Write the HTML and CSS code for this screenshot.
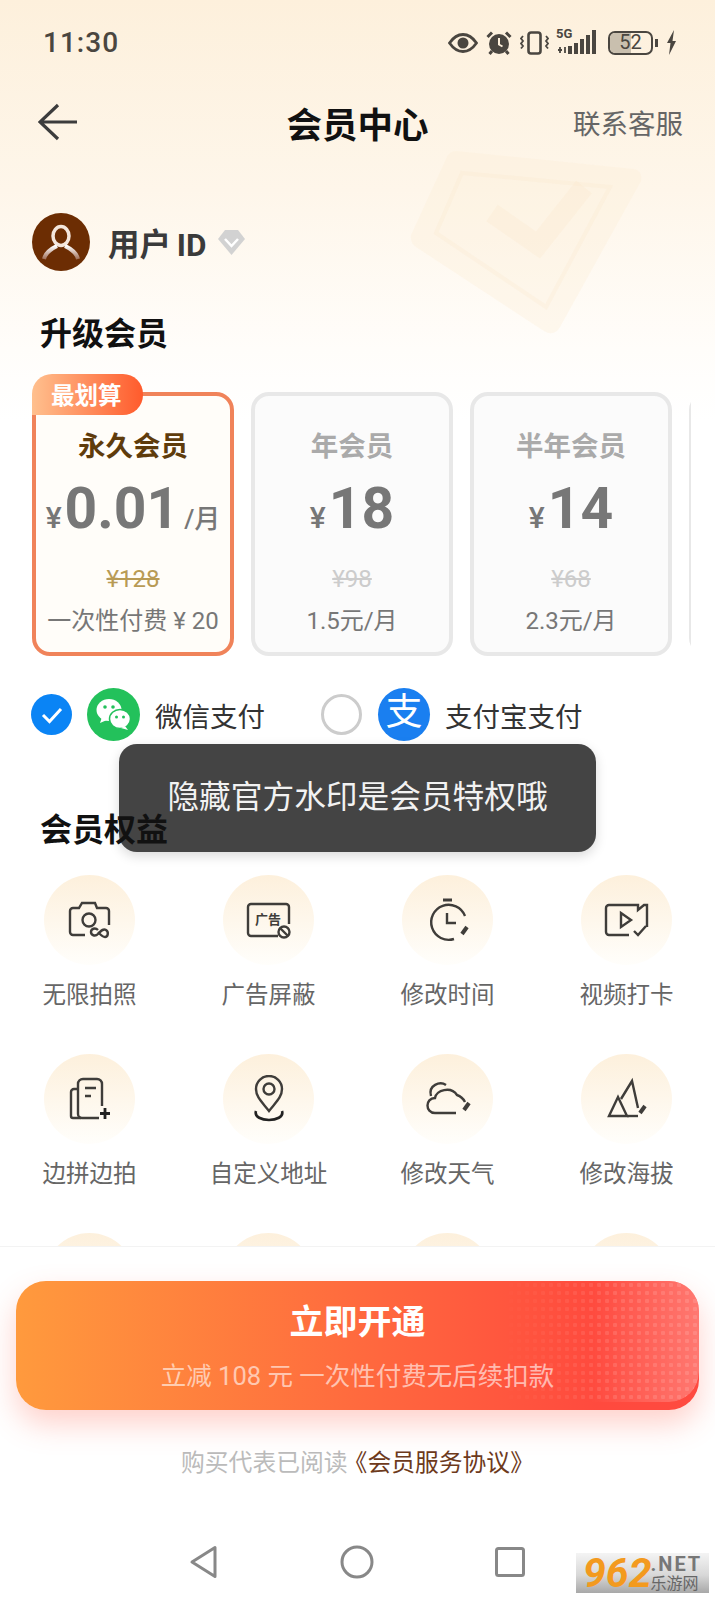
FILE: index.html
```html
<!DOCTYPE html>
<html>
<head>
    <title>会员中心</title>
    <link rel="stylesheet" href="styles.css">
</head>
<body>
<div class="page">
    <!-- Faded check badge behind the header -->
    <svg class="bg-mark" viewBox="0 0 233 188" width="233" height="188">
        <path d="M46 4 L224 22 Q233 24 231 34 L150 180 Q144 190 134 184 L6 100 Q0 96 1 88 L36 12 Q39 4 46 4Z" fill="#fdeed8" opacity="0.35"/>
        <path d="M52 26 L200 40 L136 160 L26 86Z" fill="none" stroke="#fde8cc" stroke-width="4" opacity="0.25"/>
        <path d="M82 66 L128 98 L174 40" fill="none" stroke="#fde8cc" stroke-width="20" opacity="0.3"/>
    </svg>

    <div class="main">
        <div class="status">
            <span class="time">11:30</span>
            <div class="status-icons">
                <svg width="30" height="20" viewBox="0 0 30 20"><path d="M1.5 10C6 3.5 10 1.5 15 1.5S24 3.500 28.500 10C24 16.500 20 18.500 15 18.500S6 16.500 1.500 10Z" fill="none" stroke="#4a4640" stroke-width="2.800"/><circle cx="15" cy="10" r="5.500" fill="#4a4640"/></svg>
                <svg width="26" height="24" viewBox="0 0 26 24"><circle cx="13" cy="13" r="10" fill="#4a4640"/><path d="M13 7v6.500l3.500 2" fill="none" stroke="#fdf0dc" stroke-width="2"/><path d="M1.500 6L6 1.500M24.500 6L20 1.500M6 20l-2.500 3M20 20l2.500 3" stroke="#4a4640" stroke-width="3"/></svg>
                <svg width="29" height="24" viewBox="0 0 29 24"><rect x="8.500" y="1.500" width="12" height="21" rx="2.500" fill="none" stroke="#4a4640" stroke-width="2.600"/><path d="M3 5l-2 2.500 2 2.500-2 2.500 2 2.500-2 2.500M26 5l2 2.500-2 2.500 2 2.500-2 2.500 2 2.500" fill="none" stroke="#4a4640" stroke-width="1.800"/></svg>
                <div class="signal">
                    <span class="five-g">5G</span>
                    <svg width="41" height="25" viewBox="0 0 41 25"><path d="M1 20h4M3 17v6M8 17v6" stroke="#4a4640" stroke-width="1.800"/><rect x="11" y="16" width="4" height="8" fill="#4a4640"/><rect x="17" y="13" width="4" height="11" fill="#4a4640"/><rect x="23" y="9" width="4" height="15" fill="#4a4640"/><rect x="29" y="5" width="4" height="19" fill="#4a4640"/><rect x="35" y="0" width="4" height="24" fill="#4a4640"/></svg>
                </div>
                <div class="battery"><span class="battery-level"></span><span class="battery-num">52</span></div>
                <span class="battery-nub"></span>
                <svg width="11" height="25" viewBox="0 0 11 25"><path d="M8 0L1 13h3.500L3 25l7-14H6.500Z" fill="#4a4640"/></svg>
            </div>
        </div>

        <div class="nav">
            <svg width="40" height="38" viewBox="0 0 40 38"><path d="M20 2L2 19l18 17M2 19h37" fill="none" stroke="#3c3c3c" stroke-width="3.200"/></svg>
            <h1 class="nav-title">会员中心</h1>
            <span class="nav-link">联系客服</span>
        </div>

        <div class="user">
            <svg class="avatar" width="58" height="58" viewBox="0 0 58 58">
                <defs><linearGradient id="shoulder" x1="0" y1="0" x2="0" y2="1"><stop offset="0" stop-color="#fff"/><stop offset="1" stop-color="#a0705a"/></linearGradient></defs>
                <circle cx="29" cy="29" r="29" fill="#6c2d03"/>
                <ellipse cx="29" cy="23" rx="8" ry="9.500" fill="none" stroke="#f4e6dc" stroke-width="3.500"/>
                <path d="M12 46c2-8 9-11 13-13M46 46c-2-8-9-11-13-13" fill="none" stroke="url(#shoulder)" stroke-width="4"/>
            </svg>
            <span class="user-name">用户 ID</span>
            <svg width="27" height="26" viewBox="0 0 27 26"><path d="M7 1h13l7 9-13.500 16L0 10Z" fill="#d2d2d2"/><path d="M7 10l6.500 7 6.500-7" fill="none" stroke="#fff" stroke-width="2.500"/></svg>
        </div>

        <h2 class="section-title">升级会员</h2>

        <div class="plans">
            <div class="plan plan-active">
                <span class="plan-badge">最划算</span>
                <div class="plan-name">永久会员</div>
                <div class="plan-price"><span class="yen">¥</span><span class="amount">0.01</span><span class="unit">/月</span></div>
                <div class="plan-old">¥128</div>
                <div class="plan-note">一次性付费 ¥ 20</div>
            </div>
            <div class="plan">
                <div class="plan-name">年会员</div>
                <div class="plan-price"><span class="yen">¥</span><span class="amount">18</span></div>
                <div class="plan-old">¥98</div>
                <div class="plan-note">1.5元/月</div>
            </div>
            <div class="plan">
                <div class="plan-name">半年会员</div>
                <div class="plan-price"><span class="yen">¥</span><span class="amount">14</span></div>
                <div class="plan-old">¥68</div>
                <div class="plan-note">2.3元/月</div>
            </div>
            <div class="plan"></div>
        </div>

        <div class="pay">
            <div class="pay-item pay-wechat">
                <svg class="pay-check" width="41" height="41" viewBox="0 0 41 41"><circle cx="20.500" cy="20.500" r="20.500" fill="#0a84f5"/><path d="M12 21l6.500 6.500L30 15" fill="none" stroke="#fff" stroke-width="3"/></svg>
                <svg width="53" height="53" viewBox="0 0 53 53">
                    <circle cx="26.500" cy="26.500" r="26.500" fill="#23c15b"/>
                    <ellipse cx="22" cy="22" rx="12.500" ry="11" fill="#fff"/>
                    <path d="M15 29l-2 6 7-3Z" fill="#fff"/>
                    <ellipse cx="33" cy="31" rx="10.500" ry="9.500" fill="#fff" stroke="#23c15b" stroke-width="1.500"/>
                    <path d="M38 38l3 4-7-2Z" fill="#fff"/>
                    <circle cx="18" cy="19" r="1.800" fill="#23c15b"/><circle cx="26" cy="19" r="1.800" fill="#23c15b"/>
                    <circle cx="29.500" cy="29" r="1.500" fill="#23c15b"/><circle cx="36.500" cy="29" r="1.500" fill="#23c15b"/>
                </svg>
                <span class="pay-label">微信支付</span>
            </div>
            <div class="pay-item pay-ali">
                <span class="pay-radio"></span>
                <span class="ali-logo">支</span>
                <span class="pay-label">支付宝支付</span>
            </div>
        </div>

        <h2 class="section-title perks-title">会员权益</h2>

        <div class="perks">
            <div class="perk">
                <div class="perk-icon"><svg width="48" height="48" viewBox="0 0 48 48"><g fill="none" stroke="#3f3d3a" stroke-width="2.400"><path d="M19 39H7a3 3 0 0 1-3-3V15a3 3 0 0 1 3-3h6l3-5h13l2 5h9a3 3 0 0 1 3 3v14"/><circle cx="23" cy="24" r="6.500"/><path d="M32 34c-3-3-7-1-7 2s4 5 7 2 5-6 8-4 2 7-1 7-5-3-7-5"/></g></svg></div>
                <span class="perk-label">无限拍照</span>
            </div>
            <div class="perk">
                <div class="perk-icon"><svg width="48" height="48" viewBox="0 0 48 48"><g fill="none" stroke="#3f3d3a" stroke-width="2.400"><path d="M33 40H6a3 3 0 0 1-3-3V11a3 3 0 0 1 3-3h35a3 3 0 0 1 3 3v17"/><circle cx="39" cy="36" r="5.500"/><path d="M35 32l8 8"/></g><text x="10" y="28" class="ad-text">广告</text></svg></div>
                <span class="perk-label">广告屏蔽</span>
            </div>
            <div class="perk">
                <div class="perk-icon"><svg width="48" height="48" viewBox="0 0 48 48"><g fill="none" stroke="#3f3d3a" stroke-width="2.400"><path d="M19 4h9" stroke-width="3"/><path d="M30 43A17.500 17.500 0 1 1 41 20"/><path d="M23 17v10h9"/><path d="M43 31l-5 7" stroke-width="4"/></g></svg></div>
                <span class="perk-label">修改时间</span>
            </div>
            <div class="perk">
                <div class="perk-icon"><svg width="48" height="48" viewBox="0 0 48 48"><g fill="none" stroke="#3f3d3a" stroke-width="2.400"><path d="M26 39H6a3 3 0 0 1-3-3V12a3 3 0 0 1 3-3h29v5l6-5h3v22"/><path d="M18 17l10 7-10 7Z"/><path d="M31 35l4 4 8-9"/></g></svg></div>
                <span class="perk-label">视频打卡</span>
            </div>
            <div class="perk">
                <div class="perk-icon"><svg width="48" height="48" viewBox="0 0 48 48"><g fill="none" stroke="#3f3d3a" stroke-width="2.400"><path d="M12 14H8a3 3 0 0 0-3 3v24a2 2 0 0 0 2 2h8"/><path d="M36 31V9a5 5 0 0 0-5-5H17a5 5 0 0 0-5 5v30a4 4 0 0 0 4 4h17"/><path d="M19 13h11M19 21h6"/><path d="M39 33v11M34 38.500h10" stroke="#222" stroke-width="2.800"/></g></svg></div>
                <span class="perk-label">边拼边拍</span>
            </div>
            <div class="perk">
                <div class="perk-icon"><svg width="48" height="48" viewBox="0 0 48 48"><g fill="none" stroke="#3f3d3a" stroke-width="2.400"><path d="M24 36C17 27 11 22 11 14a13 13 0 0 1 26 0c0 8-6 13-13 22Z"/><circle cx="24" cy="14" r="5.500"/><path d="M11 36c-2 6 6 9 13 9s15-3 13-9" stroke="#222" stroke-width="2.600"/></g></svg></div>
                <span class="perk-label">自定义地址</span>
            </div>
            <div class="perk">
                <div class="perk-icon"><svg width="48" height="48" viewBox="0 0 48 48"><g fill="none" stroke="#3f3d3a" stroke-width="2.400"><path d="M32 38H11c-10 0-10-15 0-15 1-8 16-12 22-3 3 1 6 3 8 7"/><path d="M7 21c-3-11 9-15 15-11"/><path d="M45 28l-5 7" stroke-width="4"/></g></svg></div>
                <span class="perk-label">修改天气</span>
            </div>
            <div class="perk">
                <div class="perk-icon"><svg width="48" height="48" viewBox="0 0 48 48"><g fill="none" stroke="#3f3d3a" stroke-width="2.400"><path d="M6 41l9-19 9 19H6Z"/><path d="M18 24L29 6l6 27"/><path d="M24 41h11"/><path d="M42 31l-5 7" stroke-width="4"/></g></svg></div>
                <span class="perk-label">修改海拔</span>
            </div>
            <div class="perk"><div class="perk-icon"></div></div>
            <div class="perk"><div class="perk-icon"></div></div>
            <div class="perk"><div class="perk-icon"></div></div>
            <div class="perk"><div class="perk-icon"></div></div>
        </div>
    </div>

    <div class="footer">
        <div class="buy-btn">
            <span class="buy-title">立即开通</span>
            <span class="buy-sub">立减 108 元 一次性付费无后续扣款</span>
        </div>
        <p class="agree">购买代表已阅读<span class="agree-link">《会员服务协议》</span></p>
        <div class="sysnav">
            <svg width="30" height="34" viewBox="0 0 30 34"><path d="M26 2.500V31.500L3 17Z" fill="none" stroke="#888" stroke-width="3" stroke-linejoin="round"/></svg>
            <svg width="34" height="34" viewBox="0 0 34 34"><circle cx="17" cy="17" r="15" fill="none" stroke="#888" stroke-width="3"/></svg>
            <svg width="30" height="30" viewBox="0 0 30 30"><rect x="1.500" y="1.500" width="27" height="27" rx="2" fill="none" stroke="#888" stroke-width="3"/></svg>
        </div>
    </div>

    <!-- Toast sits over the content -->
    <div class="toast">隐藏官方水印是会员特权哦</div>

    <!-- Site stamp in the corner -->
    <div class="stamp">
        <span class="stamp-num">962</span>
        <div class="stamp-right">
            <span class="stamp-net">.NET</span>
            <span class="stamp-cn">乐游网</span>
        </div>
    </div>
</div>
</body>
</html>
```

FILE: styles.css
```css
* {
    box-sizing: border-box;
}

body {
    margin: 0;
    background: #fff;
    font-family: Roboto, "Noto Sans CJK SC", sans-serif;
}

.page {
    position: relative;
    width: 715px;
    height: 1600px;
    overflow: hidden;
    display: flex;
    flex-direction: column;
    background: linear-gradient(to bottom, #fdf0dc 0, #fef6ea 190px, #fffdfa 350px, #fff 420px);
}

.bg-mark {
    position: absolute;
    top: 147px;
    left: 410px;
}

.main {
    position: relative;
    height: 1246px;
    overflow: hidden;
    flex: none;
}

/* Status bar */
.status {
    height: 85px;
    padding: 0 38px 0 43px;
    display: flex;
    align-items: center;
    justify-content: space-between;
}

.time {
    font-size: 28px;
    font-weight: 500;
    color: #4a4640;
    letter-spacing: 1px;
}

.status-icons {
    display: flex;
    align-items: center;
    gap: 8px;
}

.signal {
    position: relative;
    width: 41px;
    height: 25px;
}

.five-g {
    position: absolute;
    top: -3px;
    left: -1px;
    font-size: 13px;
    font-weight: 700;
    line-height: 14px;
    color: #4a4640;
}

.battery {
    position: relative;
    width: 45px;
    height: 24px;
    margin-left: 2px;
    border: 2.500px solid #4a4640;
    border-radius: 7px;
    overflow: hidden;
    text-align: center;
}

.battery-level {
    position: absolute;
    left: 0;
    top: 0;
    bottom: 0;
    width: 52%;
    background: #c9bfae;
}

.battery-num {
    position: relative;
    font-size: 20px;
    line-height: 19px;
    display: block;
    color: #4a4640;
}

.battery-nub {
    width: 3px;
    height: 8px;
    margin-left: -6px;
    background: #4a4640;
}

/* Top navigation */
.nav {
    position: relative;
    height: 74px;
    padding: 0 32px 0 38px;
    display: flex;
    align-items: center;
    justify-content: space-between;
}

.nav-title {
    position: absolute;
    left: 0;
    right: 0;
    margin: 0;
    text-align: center;
    font-size: 35.500px;
    font-weight: 700;
    color: #111;
}

.nav-link {
    font-size: 27.500px;
    color: #666;
}

.user {
    margin-top: 54px;
    padding-left: 32px;
    display: flex;
    align-items: center;
}

.user-name {
    margin-left: 18px;
    margin-right: 11px;
    font-size: 31.500px;
    font-weight: 700;
    color: #3a3a3a;
    word-spacing: -2px;
}

.section-title {
    margin: 43px 0 0 40px;
    font-size: 32px;
    line-height: 40px;
    font-weight: 700;
    color: #111;
}

/* Plan cards */
.plans {
    margin: 20px 24px 0 32px;
    padding-top: 18px;
    display: flex;
    gap: 17px;
    overflow: hidden;
}

.plan {
    position: relative;
    flex: none;
    width: 202px;
    height: 264px;
    padding-top: 33px;
    display: flex;
    flex-direction: column;
    align-items: center;
    background: #fbfbfb;
    border: 4px solid #e8e8e8;
    border-radius: 18px;
}

.plan-active {
    background: #fffdf9;
    border-color: #f0835a;
}

.plan-badge {
    position: absolute;
    top: -22px;
    left: -4px;
    width: 111px;
    height: 41px;
    padding-left: 19px;
    font-size: 23.500px;
    line-height: 44px;
    font-weight: 700;
    color: #fff;
    background: linear-gradient(to right, #ffc08e, #ff5b2c);
    border-radius: 20px 20px 20px 0;
}

.plan-name {
    font-size: 27.500px;
    line-height: 36px;
    font-weight: 700;
    color: #aaa;
}

.plan-active .plan-name {
    color: #5f3c0c;
}

.plan-price {
    margin-top: 6px;
    height: 76px;
    display: flex;
    align-items: baseline;
    color: #777;
}

.yen {
    font-size: 30px;
    font-weight: 500;
    margin-right: 3px;
}

.amount {
    font-size: 57px;
    line-height: 76px;
    font-weight: 700;
}

.unit {
    margin-left: 5px;
    font-size: 26px;
    font-weight: 500;
}

.plan-old {
    margin-top: 15px;
    font-size: 24px;
    line-height: 34px;
    color: #ccc;
    text-decoration: line-through;
}

.plan-active .plan-old {
    color: #b89b55;
}

.plan-note {
    margin-top: 8px;
    font-size: 24px;
    line-height: 34px;
    color: #777;
    white-space: nowrap;
}

/* Payment options */
.pay {
    margin-top: 32px;
    padding-left: 31px;
    height: 53px;
    display: flex;
    align-items: center;
}

.pay-item {
    display: flex;
    align-items: center;
}

.pay-wechat {
    width: 290px;
}

.pay-check {
    margin-right: 15px;
}

.pay-label {
    margin-left: 15px;
    font-size: 27.500px;
    color: #333;
}

.pay-radio {
    width: 41px;
    height: 41px;
    margin-right: 16px;
    border: 3.500px solid #ccc;
    border-radius: 50%;
    background: #fff;
}

.ali-logo {
    width: 52px;
    height: 53px;
    border-radius: 50%;
    background: #1a7ff0;
    color: #fff;
    font-size: 37px;
    line-height: 50px;
    text-align: center;
}

.perks-title {
    position: relative;
    z-index: 3;
    margin-top: 69px;
}

/* Benefit grid */
.perks {
    margin-top: 25px;
    display: grid;
    grid-template-columns: repeat(4, 179px);
    row-gap: 42px;
}

.perk {
    display: flex;
    flex-direction: column;
    align-items: center;
}

.perk-icon {
    width: 91px;
    height: 90px;
    border-radius: 50%;
    display: flex;
    align-items: center;
    justify-content: center;
    background: linear-gradient(to bottom, #fdf0dc, #fffefb);
}

.ad-text {
    font-size: 13px;
    font-weight: 700;
    fill: #3f3d3a;
}

.perk-label {
    margin-top: 13px;
    font-size: 23.500px;
    line-height: 34px;
    color: #666;
    white-space: nowrap;
}

/* Footer */
.footer {
    flex: none;
    height: 354px;
    background: #fff;
    border-top: 1px solid #f3f3f3;
    padding-top: 34px;
}

.buy-btn {
    position: relative;
    height: 129px;
    margin: 0 16px;
    display: flex;
    flex-direction: column;
    align-items: center;
    border-radius: 30px;
    background: linear-gradient(to right, #ff9a3d 0, #ff6a3e 50%, #ff4a3e 85%, #ff4a40 100%);
    box-shadow: 0 14px 30px rgba(255, 90, 70, 0.28);
    overflow: visible;
}

/* Dotted sheen on the right end of the button */
.buy-btn::after {
    content: "";
    position: absolute;
    top: 0;
    right: 0;
    bottom: 8px;
    width: 200px;
    border-radius: 0 30px 30px 0;
    background:
        linear-gradient(to right, rgba(255, 255, 255, 0) 45%, rgba(255, 255, 255, 0.26) 100%),
        radial-gradient(circle, rgba(255, 255, 255, 0.12) 2px, transparent 2.500px) 0 0 / 8px 8px;
    -webkit-mask-image: linear-gradient(to right, transparent 0, #000 60%);
    mask-image: linear-gradient(to right, transparent 0, #000 60%);
}

.buy-title {
    margin-top: 17px;
    font-size: 34px;
    line-height: 48px;
    font-weight: 700;
    color: #fff;
}

.buy-sub {
    margin-top: 12px;
    font-size: 25.500px;
    line-height: 36px;
    color: rgba(255, 255, 255, 0.6);
    white-space: nowrap;
}

.agree {
    margin: 35px 0 0;
    text-align: center;
    font-size: 23.800px;
    line-height: 36px;
    color: #bbb;
}

.agree-link {
    margin-left: -4px;
    color: #6d3a1c;
}

.sysnav {
    margin-top: 64px;
    padding-left: 189px;
    display: flex;
    align-items: center;
    gap: 121px;
}

/* Overlays */
.toast {
    position: absolute;
    z-index: 2;
    top: 744px;
    left: 119px;
    width: 477px;
    height: 108px;
    border-radius: 18px;
    background: #444;
    box-shadow: 0 4px 12px rgba(0, 0, 0, 0.15);
    color: #f2f2f2;
    font-size: 31.700px;
    line-height: 108px;
    text-align: center;
}

.stamp {
    position: absolute;
    z-index: 4;
    left: 576px;
    top: 1553px;
    width: 133px;
    height: 40px;
    padding: 0 2px 0 7px;
    display: flex;
    align-items: center;
    background: linear-gradient(to bottom, #f4f4f4, #d8d8d8 55%, #a8a8a8);
}

.stamp-num {
    font-size: 41px;
    font-weight: 700;
    font-style: italic;
    line-height: 40px;
    color: #f39a1e;
}

.stamp-right {
    display: flex;
    flex-direction: column;
    margin-left: -1px;
}

.stamp-net {
    font-size: 20px;
    line-height: 21px;
    font-weight: 700;
    letter-spacing: 2px;
    color: #777;
}

.stamp-cn {
    font-size: 16px;
    line-height: 17px;
    color: #666;
}
```
